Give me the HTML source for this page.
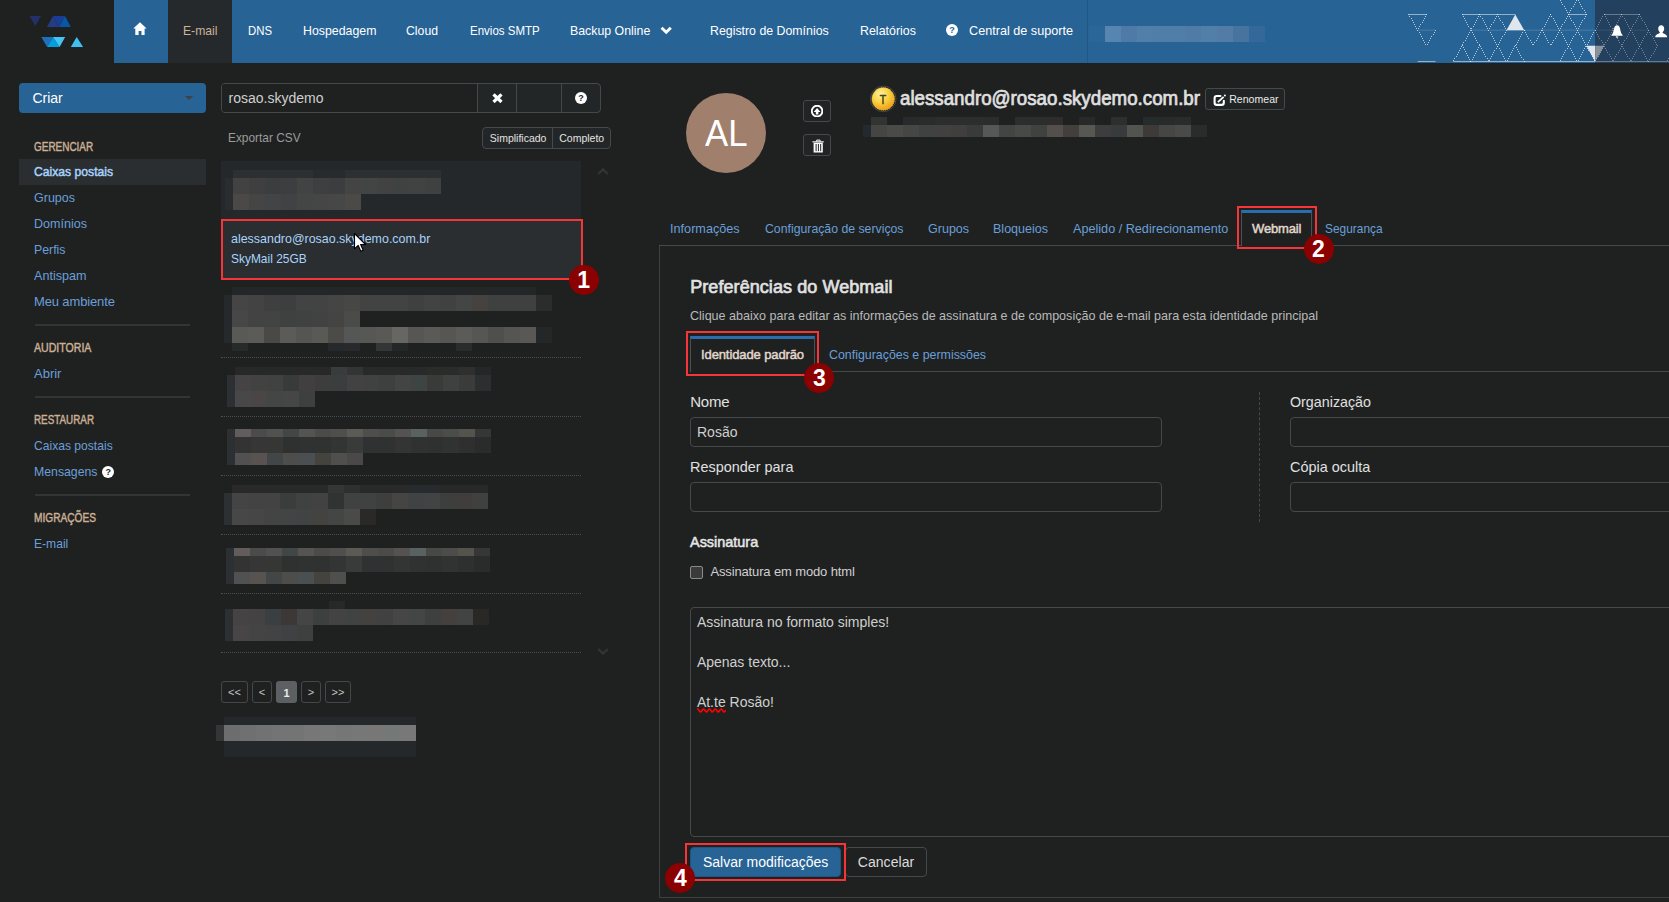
<!DOCTYPE html>
<html lang="pt-BR"><head><meta charset="utf-8"><title>SkyMail - Painel</title><style>
html,body{margin:0;padding:0;}
body{width:1669px;height:902px;overflow:hidden;background:#1f2121;position:relative;font-family:"Liberation Sans",sans-serif;}
.a{position:absolute;display:block;}
.t{position:absolute;white-space:nowrap;line-height:20px;font-family:"Liberation Sans",sans-serif;}
.q{border-radius:50%;text-align:center;font-weight:700;font-family:"Liberation Sans",sans-serif;}
.badge{width:30px;height:30px;border-radius:15px;background:#8b0000;color:#fff;font-weight:700;font-size:23px;line-height:30px;text-align:center;font-family:"Liberation Sans",sans-serif;}
</style></head>
<body>
<div class="a" style="left:114px;top:0px;width:1555px;height:63px;background:#286396;"></div>
<div class="a" style="left:168px;top:0px;width:64px;height:63px;background:#26292b;"></div>
<svg class="a" style="left:20px;top:10px;" width="80" height="45" viewBox="0 0 80 45"><polygon points="9.5,6 21,6 15.3,16.1" fill="#243068"/><polygon points="26.9,16.9 33,6 38.9,16.9" fill="#253c80"/><polygon points="33,6 45,6 38.9,16.9" fill="#1a3c94"/><polygon points="38.9,16.9 45,6 50.8,16.9" fill="#0757a6"/><polygon points="21.3,27 33,27 27.1,37.1" fill="#1e70bc"/><polygon points="27.1,37.1 33,27 39.6,37.1" fill="#00a0e0"/><polygon points="33,27 45.2,27 39.6,37.1" fill="#45c3f3"/><polygon points="56.7,27 50.8,37.1 63.1,37.1" fill="#3fc1f3"/></svg>
<svg class="a" style="left:133.1px;top:22px;" width="14" height="13.5" viewBox="0 0 14 13.5"><path d="M6.96 0.15 L13.6 6.6 L11.6 6.6 L11.6 13.1 L8.5 13.1 L8.5 9.1 L5.6 9.1 L5.6 13.1 L2.3 13.1 L2.3 6.6 L0.3 6.6 Z" fill="#fff"/></svg>
<div class="t" style="left:183.00px;top:21px;font-size:13px;color:#cbb39c;transform:scaleX(0.9366);transform-origin:0 50%;">E-mail</div>
<div class="t" style="left:247.60px;top:21px;font-size:13px;color:#fff;transform:scaleX(0.8745);transform-origin:0 50%;">DNS</div>
<div class="t" style="left:302.50px;top:21px;font-size:13px;color:#fff;transform:scaleX(0.9505);transform-origin:0 50%;">Hospedagem</div>
<div class="t" style="left:406.40px;top:21px;font-size:13px;color:#fff;transform:scaleX(0.9422);transform-origin:0 50%;">Cloud</div>
<div class="t" style="left:469.60px;top:21px;font-size:13px;color:#fff;transform:scaleX(0.8852);transform-origin:0 50%;">Envios SMTP</div>
<div class="t" style="left:569.70px;top:21px;font-size:13px;color:#fff;transform:scaleX(0.9498);transform-origin:0 50%;">Backup Online</div>
<svg class="a" style="left:660.3px;top:26.1px;" width="12.5" height="9" viewBox="0 0 12.5 9"><path d="M1.6 1.7 L6.2 6.3 L10.8 1.7" stroke="#fff" stroke-width="2.9" fill="none"/></svg>
<div class="t" style="left:710.40px;top:21px;font-size:13px;color:#fff;transform:scaleX(0.9496);transform-origin:0 50%;">Registro de Domínios</div>
<div class="t" style="left:859.60px;top:21px;font-size:13px;color:#fff;transform:scaleX(0.9552);transform-origin:0 50%;">Relatórios</div>
<div class="a q" style="left:946px;top:24.3px;width:12px;height:12px;background:#fff;color:#286396;font-size:9px;line-height:12px;">?</div>
<div class="t" style="left:968.80px;top:21px;font-size:13px;color:#fff;transform:scaleX(0.9724);transform-origin:0 50%;">Central de suporte</div>
<div class="a" style="left:1087px;top:0px;width:1px;height:63px;background:rgba(0,0,0,0.12);"></div>
<div class="a" style="left:1089px;top:26px;width:16px;height:16px;background:#2c6699;"></div>
<div class="a" style="left:1105px;top:26px;width:16px;height:16px;background:#5585b0;"></div>
<div class="a" style="left:1121px;top:26px;width:16px;height:16px;background:#4f7aa8;"></div>
<div class="a" style="left:1137px;top:26px;width:16px;height:16px;background:#517fa9;"></div>
<div class="a" style="left:1153px;top:26px;width:16px;height:16px;background:#4f7ea8;"></div>
<div class="a" style="left:1169px;top:26px;width:16px;height:16px;background:#4f7ea8;"></div>
<div class="a" style="left:1185px;top:26px;width:16px;height:16px;background:#507ba7;"></div>
<div class="a" style="left:1201px;top:26px;width:16px;height:16px;background:#517fa8;"></div>
<div class="a" style="left:1217px;top:26px;width:16px;height:16px;background:#527ba6;"></div>
<div class="a" style="left:1233px;top:26px;width:16px;height:16px;background:#46749f;"></div>
<div class="a" style="left:1249px;top:26px;width:16px;height:16px;background:#34689b;"></div>
<div class="a" style="left:1595px;top:0px;width:74px;height:63px;background:#23405f;"></div>
<svg class="a" style="left:1400px;top:0px;" width="269" height="63" viewBox="0 0 269 63"><style>.d,.k{stroke:#fff;stroke-width:1;fill:none}.d{stroke-opacity:.66}.k{stroke-opacity:.36}.s{stroke:#fff;stroke-opacity:.5;stroke-width:1;fill:none}.g{stroke:#fff;stroke-opacity:.3;stroke-width:1;fill:none}.f{stroke:#fff;stroke-opacity:.16;stroke-width:1;fill:none}.h{stroke:#fff;stroke-opacity:.09;stroke-width:1;fill:none}</style><path class="s" d="M8.85 14.50 L26.60 14.50"/><path class="f" d="M17.72 30.17 L35.47 30.17"/><path class="s" d="M17.72 61.50 L35.47 61.50"/><path class="s" d="M62.10 14.50 L115.35 14.50"/><polygon points="115.3,14.5 106.5,30.2 124.2,30.2" fill="#dfe6ee"/><path class="f" d="M70.97 30.17 L195.22 30.17"/><path class="s" d="M168.60 14.50 L186.35 14.50"/><polygon points="186.3,45.8 195.2,45.8 195.2,61.5" fill="#dfe6ee"/><path class="s" d="M53.22 61.50 L195.22 61.50"/><polygon points="195.2,45.8 204.1,45.8 195.2,61.5" fill="#8b9198"/><path class="g" d="M204.10 14.50 L239.60 14.50"/><path class="h" d="M195.22 30.17 L212.97 30.17"/><path class="h" d="M230.72 30.17 L248.47 30.17"/><path class="g" d="M195.22 61.50 L269.00 61.50"/><path class="d" d="M8 14.5h1M9 16.5h1M11 18.5h1M12 20.5h1M13 22.5h1M14 24.5h1M15 26.5h1M16 28.5h1M26 14.5h1M25 16.5h1M24 18.5h1M23 20.5h1M22 22.5h1M20 24.5h1M19 26.5h1M18 28.5h1M17 30.5h1M19 32.5h1M20 34.5h1M21 36.5h1M22 38.5h1M23 40.5h1M24 42.5h1M25 44.5h1M35 30.5h1M34 32.5h1M33 34.5h1M31 36.5h1M30 38.5h1M29 40.5h1M28 42.5h1M27 44.5h1M62 14.5h1M63 16.5h1M64 18.5h1M65 20.5h1M66 22.5h1M67 24.5h1M68 26.5h1M70 28.5h1M71 30.5h1M72 32.5h1M73 34.5h1M74 36.5h1M75 38.5h1M76 40.5h1M77 42.5h1M79 44.5h1M80 46.5h1M81 48.5h1M82 50.5h1M83 52.5h1M84 54.5h1M85 56.5h1M87 58.5h1M88 60.5h1M79 14.5h1M78 16.5h1M77 18.5h1M76 20.5h1M75 22.5h1M74 24.5h1M73 26.5h1M71 28.5h1M70 30.5h1M69 32.5h1M68 34.5h1M67 36.5h1M66 38.5h1M65 40.5h1M63 42.5h1M62 44.5h1M61 46.5h1M60 48.5h1M59 50.5h1M58 52.5h1M57 54.5h1M56 56.5h1M54 58.5h1M53 60.5h1M79 14.5h1M80 16.5h1M82 18.5h1M83 20.5h1M84 22.5h1M85 24.5h1M86 26.5h1M87 28.5h1M88 30.5h1M90 32.5h1M91 34.5h1M92 36.5h1M93 38.5h1M94 40.5h1M95 42.5h1M96 44.5h1M97 46.5h1M99 48.5h1M100 50.5h1M101 52.5h1M102 54.5h1M103 56.5h1M104 58.5h1M105 60.5h1M97 14.5h1M96 16.5h1M95 18.5h1M94 20.5h1M93 22.5h1M91 24.5h1M90 26.5h1M89 28.5h1M97 14.5h1M98 16.5h1M99 18.5h1M100 20.5h1M102 22.5h1M103 24.5h1M104 26.5h1M105 28.5h1M106 30.5h1M105 32.5h1M104 34.5h1M102 36.5h1M101 38.5h1M100 40.5h1M99 42.5h1M98 44.5h1M97 46.5h1M96 48.5h1M94 50.5h1M93 52.5h1M92 54.5h1M91 56.5h1M90 58.5h1M89 60.5h1M124 30.5h1M122 32.5h1M121 34.5h1M120 36.5h1M119 38.5h1M118 40.5h1M117 42.5h1M116 44.5h1M114 46.5h1M113 48.5h1M112 50.5h1M111 52.5h1M110 54.5h1M109 56.5h1M108 58.5h1M107 60.5h1M115 45.5h1M116 47.5h1M117 49.5h1M118 51.5h1M119 53.5h1M120 55.5h1M121 57.5h1M123 59.5h1M124 61.5h1M124 30.5h1M125 32.5h1M126 34.5h1M127 36.5h1M128 38.5h1M130 40.5h1M131 42.5h1M132 44.5h1M62 45.5h1M63 47.5h1M64 49.5h1M65 51.5h1M66 53.5h1M67 55.5h1M68 57.5h1M69 59.5h1M70 61.5h1M79 45.5h1M78 47.5h1M77 49.5h1M76 51.5h1M75 53.5h1M74 55.5h1M73 57.5h1M72 59.5h1M70 61.5h1M150 14.5h1M149 16.5h1M148 18.5h1M147 20.5h1M146 22.5h1M145 24.5h1M144 26.5h1M142 28.5h1M141 30.5h1M140 32.5h1M139 34.5h1M138 36.5h1M137 38.5h1M136 40.5h1M134 42.5h1M133 44.5h1M150 14.5h1M151 16.5h1M153 18.5h1M154 20.5h1M155 22.5h1M156 24.5h1M157 26.5h1M158 28.5h1M142 30.5h1M143 32.5h1M144 34.5h1M145 36.5h1M146 38.5h1M147 40.5h1M148 42.5h1M150 44.5h1M177 -1.5h1M176 0.5h1M175 2.5h1M174 4.5h1M173 6.5h1M171 8.5h1M170 10.5h1M169 12.5h1M168 14.5h1M167 16.5h1M166 18.5h1M165 20.5h1M164 22.5h1M162 24.5h1M161 26.5h1M160 28.5h1M159 30.5h1M158 32.5h1M157 34.5h1M156 36.5h1M155 38.5h1M153 40.5h1M152 42.5h1M151 44.5h1M159 -1.5h1M160 0.5h1M161 2.5h1M162 4.5h1M164 6.5h1M165 8.5h1M166 10.5h1M167 12.5h1M168 14.5h1M169 16.5h1M170 18.5h1M171 20.5h1M173 22.5h1M174 24.5h1M175 26.5h1M176 28.5h1M177 30.5h1M178 32.5h1M179 34.5h1M181 36.5h1M182 38.5h1M183 40.5h1M184 42.5h1M185 44.5h1M186 46.5h1M187 48.5h1M188 50.5h1M190 52.5h1M191 54.5h1M192 56.5h1M193 58.5h1M194 60.5h1M177 -1.5h1M178 0.5h1M179 2.5h1M180 4.5h1M181 6.5h1M182 8.5h1M184 10.5h1M185 12.5h1M186 14.5h1M186 14.5h1M185 16.5h1M184 18.5h1M182 20.5h1M181 22.5h1M180 24.5h1M179 26.5h1M178 28.5h1M177 30.5h1M176 32.5h1M175 34.5h1M173 36.5h1M172 38.5h1M171 40.5h1M170 42.5h1M169 44.5h1M168 46.5h1M167 48.5h1M165 50.5h1M164 52.5h1M163 54.5h1M162 56.5h1M161 58.5h1M160 60.5h1M159 30.5h1M161 32.5h1M162 34.5h1M163 36.5h1M164 38.5h1M165 40.5h1M166 42.5h1M167 44.5h1M168 46.5h1M170 48.5h1M171 50.5h1M172 52.5h1M173 54.5h1M174 56.5h1M175 58.5h1M176 60.5h1M195 30.5h1M193 32.5h1M192 34.5h1M191 36.5h1M190 38.5h1M189 40.5h1M188 42.5h1M187 44.5h1M185 46.5h1M184 48.5h1M183 50.5h1M182 52.5h1M181 54.5h1M180 56.5h1M179 58.5h1M178 60.5h1"/><path class="k" d="M204 14.5h1M202 16.5h1M201 18.5h1M200 20.5h1M199 22.5h1M198 24.5h1M197 26.5h1M196 28.5h1M204 14.5h1M205 16.5h1M206 18.5h1M207 20.5h1M208 22.5h1M209 24.5h1M210 26.5h1M212 28.5h1M213 30.5h1M214 32.5h1M215 34.5h1M216 36.5h1M217 38.5h1M218 40.5h1M219 42.5h1M221 44.5h1M222 46.5h1M223 48.5h1M224 50.5h1M225 52.5h1M226 54.5h1M227 56.5h1M229 58.5h1M230 60.5h1M221 14.5h1M220 16.5h1M219 18.5h1M218 20.5h1M217 22.5h1M216 24.5h1M215 26.5h1M213 28.5h1M212 30.5h1M211 32.5h1M210 34.5h1M209 36.5h1M208 38.5h1M207 40.5h1M205 42.5h1M204 44.5h1M203 46.5h1M202 48.5h1M201 50.5h1M200 52.5h1M199 54.5h1M198 56.5h1M196 58.5h1M195 60.5h1M221 14.5h1M222 16.5h1M224 18.5h1M225 20.5h1M226 22.5h1M227 24.5h1M228 26.5h1M229 28.5h1M230 30.5h1M232 32.5h1M233 34.5h1M234 36.5h1M235 38.5h1M236 40.5h1M237 42.5h1M238 44.5h1M239 46.5h1M241 48.5h1M242 50.5h1M243 52.5h1M244 54.5h1M245 56.5h1M246 58.5h1M247 60.5h1M239 14.5h1M238 16.5h1M237 18.5h1M236 20.5h1M235 22.5h1M233 24.5h1M232 26.5h1M231 28.5h1M230 30.5h1M229 32.5h1M228 34.5h1M227 36.5h1M226 38.5h1M224 40.5h1M223 42.5h1M222 44.5h1M221 46.5h1M220 48.5h1M219 50.5h1M218 52.5h1M216 54.5h1M215 56.5h1M214 58.5h1M213 60.5h1M239 14.5h1M240 16.5h1M241 18.5h1M242 20.5h1M244 22.5h1M245 24.5h1M246 26.5h1M247 28.5h1M248 30.5h1M249 32.5h1M250 34.5h1M252 36.5h1M253 38.5h1M254 40.5h1M255 42.5h1M256 44.5h1M257 45.5h1M256 47.5h1M255 49.5h1M254 51.5h1M253 53.5h1M251 55.5h1M250 57.5h1M249 59.5h1M248 61.5h1M195 30.5h1M196 32.5h1M197 34.5h1M198 36.5h1M199 38.5h1M201 40.5h1M202 42.5h1M203 44.5h1M204 46.5h1M205 48.5h1M206 50.5h1M207 52.5h1M209 54.5h1M210 56.5h1M211 58.5h1M212 60.5h1M248 30.5h1M247 32.5h1M246 34.5h1M244 36.5h1M243 38.5h1M242 40.5h1M241 42.5h1M240 44.5h1M239 46.5h1M238 48.5h1M236 50.5h1M235 52.5h1M234 54.5h1M233 56.5h1M232 58.5h1M231 60.5h1M268 58.5h1M267 60.5h1"/></svg>
<svg class="a" style="left:1611px;top:24.5px;" width="12.2" height="13" viewBox="0 0 12.2 13"><path d="M6.05 0.2 C7.6 0.2 8.4 1.2 8.9 3 C9.4 5 9.6 6.6 10.2 8 C10.6 9 11.2 9.8 11.7 10.3 L11.7 10.8 L0.4 10.8 L0.4 10.3 C0.9 9.8 1.5 9 1.9 8 C2.5 6.6 2.7 5 3.2 3 C3.7 1.2 4.5 0.2 6.05 0.2 Z" fill="#fff"/><rect x="4.9" y="11.5" width="2.3" height="1.1" fill="#fff"/></svg>
<svg class="a" style="left:1655px;top:24.5px;" width="13" height="13" viewBox="0 0 13 13"><path d="M6.2 0.3 C8 0.3 9.2 1.6 9.2 3.6 C9.2 5.4 8.4 6.6 7.6 7.2 L7.6 8 C9.4 8.8 12 9.6 12.2 12.2 L0.2 12.2 C0.4 9.6 3 8.8 4.8 8 L4.8 7.2 C4 6.6 3.2 5.4 3.2 3.6 C3.2 1.6 4.4 0.3 6.2 0.3 Z" fill="#fff"/></svg>
<div class="a" style="left:19px;top:83px;width:187px;height:30px;background:#286396;border-radius:4px;"></div>
<div class="t" style="left:32.40px;top:88px;font-size:14px;color:#fff;">Criar</div>
<svg class="a" style="left:185px;top:96px;" width="8" height="4" viewBox="0 0 8 4"><polygon points="0,0 8,0 4,4" fill="#3f4143"/></svg>
<div class="t" style="left:34.00px;top:137px;font-size:12px;color:#cbb095;transform:scaleX(0.8298);transform-origin:0 50%;-webkit-text-stroke:0.43px currentColor;">GERENCIAR</div>
<div class="a" style="left:19px;top:159px;width:187px;height:26px;background:#2b2e30;"></div>
<div class="t" style="left:34.00px;top:162px;font-size:13px;color:#a9d3fb;transform:scaleX(0.9357);transform-origin:0 50%;-webkit-text-stroke:0.47px currentColor;">Caixas postais</div>
<div class="t" style="left:34.00px;top:188px;font-size:13px;color:#6a9fd8;transform:scaleX(0.9617);transform-origin:0 50%;">Grupos</div>
<div class="t" style="left:34.00px;top:214px;font-size:13px;color:#6a9fd8;transform:scaleX(0.9653);transform-origin:0 50%;">Domínios</div>
<div class="t" style="left:34.00px;top:240px;font-size:13px;color:#6a9fd8;transform:scaleX(0.9479);transform-origin:0 50%;">Perfis</div>
<div class="t" style="left:34.00px;top:266px;font-size:13px;color:#6a9fd8;transform:scaleX(0.9688);transform-origin:0 50%;">Antispam</div>
<div class="t" style="left:34.00px;top:292px;font-size:13px;color:#6a9fd8;letter-spacing:-0.132px;">Meu ambiente</div>
<div class="a" style="left:35px;top:324px;width:155px;height:2px;background:#323537;"></div>
<div class="t" style="left:34.00px;top:338px;font-size:12px;color:#cbb095;transform:scaleX(0.8814);transform-origin:0 50%;-webkit-text-stroke:0.43px currentColor;">AUDITORIA</div>
<div class="t" style="left:34.00px;top:364px;font-size:13px;color:#6a9fd8;letter-spacing:-0.009px;">Abrir</div>
<div class="a" style="left:35px;top:396px;width:155px;height:2px;background:#323537;"></div>
<div class="t" style="left:34.00px;top:410px;font-size:12px;color:#cbb095;transform:scaleX(0.8206);transform-origin:0 50%;-webkit-text-stroke:0.43px currentColor;">RESTAURAR</div>
<div class="t" style="left:34.00px;top:436px;font-size:13px;color:#6a9fd8;transform:scaleX(0.9310);transform-origin:0 50%;">Caixas postais</div>
<div class="t" style="left:34.00px;top:462px;font-size:13px;color:#6a9fd8;transform:scaleX(0.9448);transform-origin:0 50%;">Mensagens</div>
<div class="a q" style="left:102.3px;top:465.5px;width:12px;height:12px;background:#fff;color:#1f2121;font-size:9px;line-height:12px;">?</div>
<div class="a" style="left:35px;top:494px;width:155px;height:2px;background:#323537;"></div>
<div class="t" style="left:34.00px;top:508px;font-size:12px;color:#cbb095;transform:scaleX(0.8453);transform-origin:0 50%;-webkit-text-stroke:0.43px currentColor;">MIGRAÇÕES</div>
<div class="t" style="left:34.00px;top:534px;font-size:13px;color:#6a9fd8;transform:scaleX(0.9312);transform-origin:0 50%;">E-mail</div>
<div class="a" style="left:221px;top:83px;width:380px;height:30px;border:1px solid #45494b;border-radius:4px;box-sizing:border-box;background:#232626;"></div>
<div class="a" style="left:222px;top:84px;width:255px;height:28px;background:#1f2121;border-radius:3px 0 0 3px;"></div>
<div class="a" style="left:477px;top:84px;width:1px;height:28px;background:#45494b;"></div>
<div class="a" style="left:516px;top:84px;width:1px;height:28px;background:#45494b;"></div>
<div class="a" style="left:561px;top:84px;width:1px;height:28px;background:#45494b;"></div>
<div class="t" style="left:228.60px;top:88px;font-size:14px;color:#cfcfcf;">rosao.skydemo</div>
<svg class="a" style="left:491.5px;top:93px;" width="11" height="10.4" viewBox="0 0 11 10.4"><path d="M1.5 1.4 L9.5 9 M9.5 1.4 L1.5 9" stroke="#fff" stroke-width="3.3" fill="none"/></svg>
<div class="a q" style="left:575px;top:92px;width:12px;height:12px;background:#fff;color:#232626;font-size:9px;line-height:12px;">?</div>
<div class="t" style="left:227.90px;top:128px;font-size:13px;color:#9b9b9b;transform:scaleX(0.9135);transform-origin:0 50%;">Exportar CSV</div>
<div class="a" style="left:482px;top:127px;width:129px;height:22px;border:1px solid #45494b;border-radius:4px;box-sizing:border-box;background:#232626;"></div>
<div class="a" style="left:552px;top:128px;width:1px;height:20px;background:#45494b;"></div>
<div class="t" style="left:489.80px;top:128px;font-size:10.5px;color:#e4e4e4;">Simplificado</div>
<div class="t" style="left:559.20px;top:128px;font-size:10.5px;color:#e4e4e4;letter-spacing:0.008px;">Completo</div>
<div class="a" style="left:221px;top:161px;width:360px;height:58px;background:#25282a;"></div>
<svg class="a" style="left:597px;top:168px;" width="12" height="7" viewBox="0 0 12 7"><path d="M1.2 6 L6 1.4 L10.8 6" stroke="#323537" stroke-width="2.2" fill="none"/></svg>
<svg class="a" style="left:597px;top:647.5px;" width="12" height="7" viewBox="0 0 12 7"><path d="M1.2 1 L6 5.6 L10.8 1" stroke="#323537" stroke-width="2.2" fill="none"/></svg>
<div class="a" style="left:233px;top:170px;width:16px;height:8px;background:#2d3032;"></div>
<div class="a" style="left:249px;top:170px;width:16px;height:8px;background:#2d3032;"></div>
<div class="a" style="left:265px;top:170px;width:16px;height:8px;background:#2d3032;"></div>
<div class="a" style="left:281px;top:170px;width:16px;height:8px;background:#2d3032;"></div>
<div class="a" style="left:297px;top:170px;width:16px;height:8px;background:#2d3032;"></div>
<div class="a" style="left:313px;top:170px;width:16px;height:8px;background:#282b2d;"></div>
<div class="a" style="left:329px;top:170px;width:16px;height:8px;background:#282b2d;"></div>
<div class="a" style="left:345px;top:170px;width:16px;height:8px;background:#2d3032;"></div>
<div class="a" style="left:361px;top:170px;width:16px;height:8px;background:#2d3032;"></div>
<div class="a" style="left:377px;top:170px;width:16px;height:8px;background:#2d3032;"></div>
<div class="a" style="left:393px;top:170px;width:16px;height:8px;background:#2d3032;"></div>
<div class="a" style="left:409px;top:170px;width:16px;height:8px;background:#2d3032;"></div>
<div class="a" style="left:425px;top:170px;width:16px;height:8px;background:#2d3032;"></div>
<div class="a" style="left:225px;top:178px;width:8px;height:16px;background:#2a2d30;"></div>
<div class="a" style="left:233px;top:178px;width:16px;height:16px;background:#434243;"></div>
<div class="a" style="left:249px;top:178px;width:16px;height:16px;background:#403f40;"></div>
<div class="a" style="left:265px;top:178px;width:16px;height:16px;background:#3c3d3f;"></div>
<div class="a" style="left:281px;top:178px;width:16px;height:16px;background:#3c3e3f;"></div>
<div class="a" style="left:297px;top:178px;width:16px;height:16px;background:#424343;"></div>
<div class="a" style="left:313px;top:178px;width:16px;height:16px;background:#3e3f40;"></div>
<div class="a" style="left:329px;top:178px;width:16px;height:16px;background:#3b3d3e;"></div>
<div class="a" style="left:345px;top:178px;width:16px;height:16px;background:#444444;"></div>
<div class="a" style="left:361px;top:178px;width:16px;height:16px;background:#434444;"></div>
<div class="a" style="left:377px;top:178px;width:16px;height:16px;background:#424242;"></div>
<div class="a" style="left:393px;top:178px;width:16px;height:16px;background:#404141;"></div>
<div class="a" style="left:409px;top:178px;width:16px;height:16px;background:#414242;"></div>
<div class="a" style="left:425px;top:178px;width:16px;height:16px;background:#3f4040;"></div>
<div class="a" style="left:225px;top:194px;width:8px;height:16px;background:#2a2d30;"></div>
<div class="a" style="left:233px;top:194px;width:16px;height:16px;background:#4a4948;"></div>
<div class="a" style="left:249px;top:194px;width:16px;height:16px;background:#454545;"></div>
<div class="a" style="left:265px;top:194px;width:16px;height:16px;background:#434445;"></div>
<div class="a" style="left:281px;top:194px;width:16px;height:16px;background:#404243;"></div>
<div class="a" style="left:297px;top:194px;width:16px;height:16px;background:#444545;"></div>
<div class="a" style="left:313px;top:194px;width:16px;height:16px;background:#454645;"></div>
<div class="a" style="left:329px;top:194px;width:16px;height:16px;background:#474747;"></div>
<div class="a" style="left:345px;top:194px;width:16px;height:16px;background:#4b4a49;"></div>
<div class="a" style="left:221px;top:219px;width:362px;height:61px;background:#2a2e30;border:2px solid #f73538;box-sizing:border-box;"></div>
<div class="t" style="left:230.80px;top:229px;font-size:13px;color:#a9d3fb;transform:scaleX(0.9573);transform-origin:0 50%;">alessandro@rosao.skydemo.com.br</div>
<div class="t" style="left:230.80px;top:249px;font-size:13px;color:#a9d3fb;transform:scaleX(0.9191);transform-origin:0 50%;">SkyMail 25GB</div>
<div class="a badge" style="left:568.6px;top:264.6px;">1</div>
<svg class="a" style="left:353px;top:232px;" width="14" height="21" viewBox="0 0 14 21"><path d="M1.5 1.5 L1.5 16.8 L5.2 13.4 L7.8 19.3 L10.2 18.2 L7.6 12.5 L12.6 12.5 Z" fill="#fff" stroke="#000" stroke-width="1.1" stroke-linejoin="round"/></svg>
<div class="a" style="left:232px;top:287px;width:16px;height:8px;background:#242727;"></div>
<div class="a" style="left:248px;top:287px;width:16px;height:8px;background:#242727;"></div>
<div class="a" style="left:264px;top:287px;width:16px;height:8px;background:#242727;"></div>
<div class="a" style="left:280px;top:287px;width:16px;height:8px;background:#242727;"></div>
<div class="a" style="left:296px;top:287px;width:16px;height:8px;background:#242727;"></div>
<div class="a" style="left:312px;top:287px;width:16px;height:8px;background:#242727;"></div>
<div class="a" style="left:328px;top:287px;width:16px;height:8px;background:#242727;"></div>
<div class="a" style="left:344px;top:287px;width:16px;height:8px;background:#242727;"></div>
<div class="a" style="left:360px;top:287px;width:16px;height:8px;background:#242727;"></div>
<div class="a" style="left:376px;top:287px;width:16px;height:8px;background:#242727;"></div>
<div class="a" style="left:392px;top:287px;width:16px;height:8px;background:#242727;"></div>
<div class="a" style="left:408px;top:287px;width:16px;height:8px;background:#242727;"></div>
<div class="a" style="left:424px;top:287px;width:16px;height:8px;background:#242727;"></div>
<div class="a" style="left:440px;top:287px;width:16px;height:8px;background:#242727;"></div>
<div class="a" style="left:456px;top:287px;width:16px;height:8px;background:#242727;"></div>
<div class="a" style="left:472px;top:287px;width:16px;height:8px;background:#242727;"></div>
<div class="a" style="left:488px;top:287px;width:16px;height:8px;background:#242727;"></div>
<div class="a" style="left:504px;top:287px;width:16px;height:8px;background:#242727;"></div>
<div class="a" style="left:520px;top:287px;width:16px;height:8px;background:#242727;"></div>
<div class="a" style="left:224px;top:295px;width:8px;height:48px;background:#25292c;"></div>
<div class="a" style="left:232px;top:295px;width:16px;height:16px;background:#464445;"></div>
<div class="a" style="left:248px;top:295px;width:16px;height:16px;background:#444344;"></div>
<div class="a" style="left:264px;top:295px;width:16px;height:16px;background:#403f3f;"></div>
<div class="a" style="left:280px;top:295px;width:16px;height:16px;background:#3d3e3f;"></div>
<div class="a" style="left:296px;top:295px;width:16px;height:16px;background:#424342;"></div>
<div class="a" style="left:312px;top:295px;width:16px;height:16px;background:#424443;"></div>
<div class="a" style="left:328px;top:295px;width:16px;height:16px;background:#454545;"></div>
<div class="a" style="left:344px;top:295px;width:16px;height:16px;background:#474746;"></div>
<div class="a" style="left:360px;top:295px;width:16px;height:16px;background:#444344;"></div>
<div class="a" style="left:376px;top:295px;width:16px;height:16px;background:#424343;"></div>
<div class="a" style="left:392px;top:295px;width:16px;height:16px;background:#434343;"></div>
<div class="a" style="left:408px;top:295px;width:16px;height:16px;background:#3f4040;"></div>
<div class="a" style="left:424px;top:295px;width:16px;height:16px;background:#424343;"></div>
<div class="a" style="left:440px;top:295px;width:16px;height:16px;background:#404141;"></div>
<div class="a" style="left:456px;top:295px;width:16px;height:16px;background:#444646;"></div>
<div class="a" style="left:472px;top:295px;width:16px;height:16px;background:#45423f;"></div>
<div class="a" style="left:488px;top:295px;width:16px;height:16px;background:#3f4040;"></div>
<div class="a" style="left:504px;top:295px;width:16px;height:16px;background:#3f4141;"></div>
<div class="a" style="left:520px;top:295px;width:16px;height:16px;background:#404040;"></div>
<div class="a" style="left:536px;top:295px;width:16px;height:16px;background:#2b2d2d;"></div>
<div class="a" style="left:232px;top:311px;width:16px;height:16px;background:#484747;"></div>
<div class="a" style="left:248px;top:311px;width:16px;height:16px;background:#434344;"></div>
<div class="a" style="left:264px;top:311px;width:16px;height:16px;background:#424343;"></div>
<div class="a" style="left:280px;top:311px;width:16px;height:16px;background:#3f4141;"></div>
<div class="a" style="left:296px;top:311px;width:16px;height:16px;background:#404241;"></div>
<div class="a" style="left:312px;top:311px;width:16px;height:16px;background:#414241;"></div>
<div class="a" style="left:328px;top:311px;width:16px;height:16px;background:#444443;"></div>
<div class="a" style="left:344px;top:311px;width:16px;height:16px;background:#4b4b4a;"></div>
<div class="a" style="left:232px;top:327px;width:16px;height:16px;background:#595955;"></div>
<div class="a" style="left:248px;top:327px;width:16px;height:16px;background:#5b5c58;"></div>
<div class="a" style="left:264px;top:327px;width:16px;height:16px;background:#4a4945;"></div>
<div class="a" style="left:280px;top:327px;width:16px;height:16px;background:#5b5b57;"></div>
<div class="a" style="left:296px;top:327px;width:16px;height:16px;background:#555653;"></div>
<div class="a" style="left:312px;top:327px;width:16px;height:16px;background:#595955;"></div>
<div class="a" style="left:328px;top:327px;width:16px;height:16px;background:#4c4b48;"></div>
<div class="a" style="left:344px;top:327px;width:16px;height:16px;background:#555756;"></div>
<div class="a" style="left:360px;top:327px;width:16px;height:16px;background:#575756;"></div>
<div class="a" style="left:376px;top:327px;width:16px;height:16px;background:#5a5955;"></div>
<div class="a" style="left:392px;top:327px;width:16px;height:16px;background:#666762;"></div>
<div class="a" style="left:408px;top:327px;width:16px;height:16px;background:#575654;"></div>
<div class="a" style="left:424px;top:327px;width:16px;height:16px;background:#5a5a56;"></div>
<div class="a" style="left:440px;top:327px;width:16px;height:16px;background:#575653;"></div>
<div class="a" style="left:456px;top:327px;width:16px;height:16px;background:#5b5b58;"></div>
<div class="a" style="left:472px;top:327px;width:16px;height:16px;background:#565654;"></div>
<div class="a" style="left:488px;top:327px;width:16px;height:16px;background:#4f4f4d;"></div>
<div class="a" style="left:504px;top:327px;width:16px;height:16px;background:#555553;"></div>
<div class="a" style="left:520px;top:327px;width:16px;height:16px;background:#595855;"></div>
<div class="a" style="left:536px;top:327px;width:16px;height:16px;background:#242727;"></div>
<div class="a" style="left:232px;top:343px;width:16px;height:8px;background:#272a2a;"></div>
<div class="a" style="left:328px;top:343px;width:16px;height:8px;background:#25292c;"></div>
<div class="a" style="left:344px;top:343px;width:16px;height:8px;background:#282a2b;"></div>
<div class="a" style="left:376px;top:343px;width:16px;height:8px;background:#323636;"></div>
<div class="a" style="left:392px;top:343px;width:16px;height:8px;background:#242727;"></div>
<div class="a" style="left:456px;top:343px;width:16px;height:8px;background:#2a2b2b;"></div>
<div class="a" style="left:221px;top:357px;width:360px;height:1px;border-top:1px dotted #4a4d4f;height:0;"></div>
<div class="a" style="left:235px;top:367px;width:16px;height:8px;background:#272929;"></div>
<div class="a" style="left:251px;top:367px;width:16px;height:8px;background:#272929;"></div>
<div class="a" style="left:267px;top:367px;width:16px;height:8px;background:#272929;"></div>
<div class="a" style="left:283px;top:367px;width:16px;height:8px;background:#272929;"></div>
<div class="a" style="left:299px;top:367px;width:16px;height:8px;background:#272929;"></div>
<div class="a" style="left:315px;top:367px;width:16px;height:8px;background:#272929;"></div>
<div class="a" style="left:331px;top:367px;width:16px;height:8px;background:#3a3b3b;"></div>
<div class="a" style="left:347px;top:367px;width:16px;height:8px;background:#333535;"></div>
<div class="a" style="left:363px;top:367px;width:16px;height:8px;background:#282a2a;"></div>
<div class="a" style="left:379px;top:367px;width:16px;height:8px;background:#282a2a;"></div>
<div class="a" style="left:395px;top:367px;width:16px;height:8px;background:#282a2a;"></div>
<div class="a" style="left:411px;top:367px;width:16px;height:8px;background:#282a2a;"></div>
<div class="a" style="left:427px;top:367px;width:16px;height:8px;background:#2a2c2c;"></div>
<div class="a" style="left:443px;top:367px;width:16px;height:8px;background:#2a2c2c;"></div>
<div class="a" style="left:459px;top:367px;width:16px;height:8px;background:#2e3030;"></div>
<div class="a" style="left:475px;top:367px;width:16px;height:8px;background:#252727;"></div>
<div class="a" style="left:227px;top:375px;width:8px;height:32px;background:#2c3033;"></div>
<div class="a" style="left:235px;top:375px;width:16px;height:16px;background:#454344;"></div>
<div class="a" style="left:251px;top:375px;width:16px;height:16px;background:#434243;"></div>
<div class="a" style="left:267px;top:375px;width:16px;height:16px;background:#424141;"></div>
<div class="a" style="left:283px;top:375px;width:16px;height:16px;background:#393b3b;"></div>
<div class="a" style="left:299px;top:375px;width:16px;height:16px;background:#413f40;"></div>
<div class="a" style="left:315px;top:375px;width:16px;height:16px;background:#3d3d3d;"></div>
<div class="a" style="left:331px;top:375px;width:16px;height:16px;background:#3b3e3e;"></div>
<div class="a" style="left:347px;top:375px;width:16px;height:16px;background:#424242;"></div>
<div class="a" style="left:363px;top:375px;width:16px;height:16px;background:#424141;"></div>
<div class="a" style="left:379px;top:375px;width:16px;height:16px;background:#3e3f3f;"></div>
<div class="a" style="left:395px;top:375px;width:16px;height:16px;background:#434444;"></div>
<div class="a" style="left:411px;top:375px;width:16px;height:16px;background:#3e4343;"></div>
<div class="a" style="left:427px;top:375px;width:16px;height:16px;background:#3a3a39;"></div>
<div class="a" style="left:443px;top:375px;width:16px;height:16px;background:#3f4040;"></div>
<div class="a" style="left:459px;top:375px;width:16px;height:16px;background:#3b3b3a;"></div>
<div class="a" style="left:475px;top:375px;width:16px;height:16px;background:#2c2f2f;"></div>
<div class="a" style="left:235px;top:391px;width:16px;height:16px;background:#484848;"></div>
<div class="a" style="left:251px;top:391px;width:16px;height:16px;background:#4a4645;"></div>
<div class="a" style="left:267px;top:391px;width:16px;height:16px;background:#444545;"></div>
<div class="a" style="left:283px;top:391px;width:16px;height:16px;background:#464646;"></div>
<div class="a" style="left:299px;top:391px;width:16px;height:16px;background:#3e4040;"></div>
<div class="a" style="left:221px;top:416px;width:360px;height:1px;border-top:1px dotted #4a4d4f;height:0;"></div>
<div class="a" style="left:227px;top:429px;width:8px;height:36px;background:#2c3033;"></div>
<div class="a" style="left:235px;top:429px;width:16px;height:8px;background:#625d5c;"></div>
<div class="a" style="left:251px;top:429px;width:16px;height:8px;background:#4b4b4b;"></div>
<div class="a" style="left:267px;top:429px;width:16px;height:8px;background:#515151;"></div>
<div class="a" style="left:283px;top:429px;width:16px;height:8px;background:#434646;"></div>
<div class="a" style="left:299px;top:429px;width:16px;height:8px;background:#555452;"></div>
<div class="a" style="left:315px;top:429px;width:16px;height:8px;background:#4c4b4a;"></div>
<div class="a" style="left:331px;top:429px;width:16px;height:8px;background:#514f4e;"></div>
<div class="a" style="left:347px;top:429px;width:16px;height:8px;background:#5c5a55;"></div>
<div class="a" style="left:363px;top:429px;width:16px;height:8px;background:#504e4c;"></div>
<div class="a" style="left:379px;top:429px;width:16px;height:8px;background:#4b4b4a;"></div>
<div class="a" style="left:395px;top:429px;width:16px;height:8px;background:#545352;"></div>
<div class="a" style="left:411px;top:429px;width:16px;height:8px;background:#5a6161;"></div>
<div class="a" style="left:427px;top:429px;width:16px;height:8px;background:#484947;"></div>
<div class="a" style="left:443px;top:429px;width:16px;height:8px;background:#4c4c4b;"></div>
<div class="a" style="left:459px;top:429px;width:16px;height:8px;background:#54534c;"></div>
<div class="a" style="left:475px;top:429px;width:16px;height:8px;background:#363636;"></div>
<div class="a" style="left:235px;top:437px;width:16px;height:16px;background:#343333;"></div>
<div class="a" style="left:251px;top:437px;width:16px;height:16px;background:#363636;"></div>
<div class="a" style="left:267px;top:437px;width:16px;height:16px;background:#363635;"></div>
<div class="a" style="left:283px;top:437px;width:16px;height:16px;background:#2f3131;"></div>
<div class="a" style="left:299px;top:437px;width:16px;height:16px;background:#303131;"></div>
<div class="a" style="left:315px;top:437px;width:16px;height:16px;background:#303131;"></div>
<div class="a" style="left:331px;top:437px;width:16px;height:16px;background:#333535;"></div>
<div class="a" style="left:347px;top:437px;width:16px;height:16px;background:#393a3a;"></div>
<div class="a" style="left:363px;top:437px;width:16px;height:16px;background:#2f3232;"></div>
<div class="a" style="left:379px;top:437px;width:16px;height:16px;background:#303232;"></div>
<div class="a" style="left:395px;top:437px;width:16px;height:16px;background:#343434;"></div>
<div class="a" style="left:411px;top:437px;width:16px;height:16px;background:#303232;"></div>
<div class="a" style="left:427px;top:437px;width:16px;height:16px;background:#2f3131;"></div>
<div class="a" style="left:443px;top:437px;width:16px;height:16px;background:#313232;"></div>
<div class="a" style="left:459px;top:437px;width:16px;height:16px;background:#2f2f2f;"></div>
<div class="a" style="left:475px;top:437px;width:16px;height:16px;background:#2a2b2b;"></div>
<div class="a" style="left:235px;top:453px;width:16px;height:12px;background:#515151;"></div>
<div class="a" style="left:251px;top:453px;width:16px;height:12px;background:#585250;"></div>
<div class="a" style="left:267px;top:453px;width:16px;height:12px;background:#434646;"></div>
<div class="a" style="left:283px;top:453px;width:16px;height:12px;background:#4d4d4c;"></div>
<div class="a" style="left:299px;top:453px;width:16px;height:12px;background:#4a5052;"></div>
<div class="a" style="left:315px;top:453px;width:16px;height:12px;background:#44433e;"></div>
<div class="a" style="left:331px;top:453px;width:16px;height:12px;background:#4f4f4e;"></div>
<div class="a" style="left:347px;top:453px;width:16px;height:12px;background:#4a4848;"></div>
<div class="a" style="left:221px;top:475px;width:360px;height:1px;border-top:1px dotted #4a4d4f;height:0;"></div>
<div class="a" style="left:232px;top:485px;width:16px;height:8px;background:#2a2929;"></div>
<div class="a" style="left:248px;top:485px;width:16px;height:8px;background:#2a2929;"></div>
<div class="a" style="left:264px;top:485px;width:16px;height:8px;background:#2a2929;"></div>
<div class="a" style="left:280px;top:485px;width:16px;height:8px;background:#2a2929;"></div>
<div class="a" style="left:296px;top:485px;width:16px;height:8px;background:#2a2929;"></div>
<div class="a" style="left:312px;top:485px;width:16px;height:8px;background:#2a2929;"></div>
<div class="a" style="left:328px;top:485px;width:16px;height:8px;background:#343535;"></div>
<div class="a" style="left:344px;top:485px;width:16px;height:8px;background:#2e3030;"></div>
<div class="a" style="left:360px;top:485px;width:16px;height:8px;background:#282a2a;"></div>
<div class="a" style="left:376px;top:485px;width:16px;height:8px;background:#282a2a;"></div>
<div class="a" style="left:392px;top:485px;width:16px;height:8px;background:#282a2a;"></div>
<div class="a" style="left:408px;top:485px;width:16px;height:8px;background:#272b2d;"></div>
<div class="a" style="left:424px;top:485px;width:16px;height:8px;background:#272b2d;"></div>
<div class="a" style="left:440px;top:485px;width:16px;height:8px;background:#272929;"></div>
<div class="a" style="left:456px;top:485px;width:16px;height:8px;background:#272929;"></div>
<div class="a" style="left:472px;top:485px;width:16px;height:8px;background:#272929;"></div>
<div class="a" style="left:224px;top:493px;width:8px;height:32px;background:#2c3033;"></div>
<div class="a" style="left:232px;top:493px;width:16px;height:16px;background:#454444;"></div>
<div class="a" style="left:248px;top:493px;width:16px;height:16px;background:#434343;"></div>
<div class="a" style="left:264px;top:493px;width:16px;height:16px;background:#434343;"></div>
<div class="a" style="left:280px;top:493px;width:16px;height:16px;background:#3b3d3d;"></div>
<div class="a" style="left:296px;top:493px;width:16px;height:16px;background:#404141;"></div>
<div class="a" style="left:312px;top:493px;width:16px;height:16px;background:#424242;"></div>
<div class="a" style="left:328px;top:493px;width:16px;height:16px;background:#313332;"></div>
<div class="a" style="left:344px;top:493px;width:16px;height:16px;background:#404141;"></div>
<div class="a" style="left:360px;top:493px;width:16px;height:16px;background:#404141;"></div>
<div class="a" style="left:376px;top:493px;width:16px;height:16px;background:#3e3e3e;"></div>
<div class="a" style="left:392px;top:493px;width:16px;height:16px;background:#464544;"></div>
<div class="a" style="left:408px;top:493px;width:16px;height:16px;background:#404343;"></div>
<div class="a" style="left:424px;top:493px;width:16px;height:16px;background:#424443;"></div>
<div class="a" style="left:440px;top:493px;width:16px;height:16px;background:#3d3f3f;"></div>
<div class="a" style="left:456px;top:493px;width:16px;height:16px;background:#403d3c;"></div>
<div class="a" style="left:472px;top:493px;width:16px;height:16px;background:#404040;"></div>
<div class="a" style="left:232px;top:509px;width:16px;height:16px;background:#484747;"></div>
<div class="a" style="left:248px;top:509px;width:16px;height:16px;background:#474646;"></div>
<div class="a" style="left:264px;top:509px;width:16px;height:16px;background:#454445;"></div>
<div class="a" style="left:280px;top:509px;width:16px;height:16px;background:#434444;"></div>
<div class="a" style="left:296px;top:509px;width:16px;height:16px;background:#414444;"></div>
<div class="a" style="left:312px;top:509px;width:16px;height:16px;background:#454340;"></div>
<div class="a" style="left:328px;top:509px;width:16px;height:16px;background:#444545;"></div>
<div class="a" style="left:344px;top:509px;width:16px;height:16px;background:#4a4a49;"></div>
<div class="a" style="left:360px;top:509px;width:16px;height:16px;background:#2b2928;"></div>
<div class="a" style="left:221px;top:534px;width:360px;height:1px;border-top:1px dotted #4a4d4f;height:0;"></div>
<div class="a" style="left:226px;top:548px;width:8px;height:36px;background:#2c3033;"></div>
<div class="a" style="left:234px;top:548px;width:16px;height:8px;background:#625d5c;"></div>
<div class="a" style="left:250px;top:548px;width:16px;height:8px;background:#4b4b4b;"></div>
<div class="a" style="left:266px;top:548px;width:16px;height:8px;background:#515151;"></div>
<div class="a" style="left:282px;top:548px;width:16px;height:8px;background:#434646;"></div>
<div class="a" style="left:298px;top:548px;width:16px;height:8px;background:#555452;"></div>
<div class="a" style="left:314px;top:548px;width:16px;height:8px;background:#4c4b4a;"></div>
<div class="a" style="left:330px;top:548px;width:16px;height:8px;background:#514f4e;"></div>
<div class="a" style="left:346px;top:548px;width:16px;height:8px;background:#5c5a55;"></div>
<div class="a" style="left:362px;top:548px;width:16px;height:8px;background:#504e4c;"></div>
<div class="a" style="left:378px;top:548px;width:16px;height:8px;background:#4b4b4a;"></div>
<div class="a" style="left:394px;top:548px;width:16px;height:8px;background:#545352;"></div>
<div class="a" style="left:410px;top:548px;width:16px;height:8px;background:#5a6161;"></div>
<div class="a" style="left:426px;top:548px;width:16px;height:8px;background:#484947;"></div>
<div class="a" style="left:442px;top:548px;width:16px;height:8px;background:#4c4c4b;"></div>
<div class="a" style="left:458px;top:548px;width:16px;height:8px;background:#54534c;"></div>
<div class="a" style="left:474px;top:548px;width:16px;height:8px;background:#363636;"></div>
<div class="a" style="left:234px;top:556px;width:16px;height:16px;background:#343333;"></div>
<div class="a" style="left:250px;top:556px;width:16px;height:16px;background:#363636;"></div>
<div class="a" style="left:266px;top:556px;width:16px;height:16px;background:#363635;"></div>
<div class="a" style="left:282px;top:556px;width:16px;height:16px;background:#2f3131;"></div>
<div class="a" style="left:298px;top:556px;width:16px;height:16px;background:#303131;"></div>
<div class="a" style="left:314px;top:556px;width:16px;height:16px;background:#303131;"></div>
<div class="a" style="left:330px;top:556px;width:16px;height:16px;background:#333535;"></div>
<div class="a" style="left:346px;top:556px;width:16px;height:16px;background:#393a3a;"></div>
<div class="a" style="left:362px;top:556px;width:16px;height:16px;background:#2f3232;"></div>
<div class="a" style="left:378px;top:556px;width:16px;height:16px;background:#303232;"></div>
<div class="a" style="left:394px;top:556px;width:16px;height:16px;background:#343434;"></div>
<div class="a" style="left:410px;top:556px;width:16px;height:16px;background:#303232;"></div>
<div class="a" style="left:426px;top:556px;width:16px;height:16px;background:#2f3131;"></div>
<div class="a" style="left:442px;top:556px;width:16px;height:16px;background:#313232;"></div>
<div class="a" style="left:458px;top:556px;width:16px;height:16px;background:#2f2f2f;"></div>
<div class="a" style="left:474px;top:556px;width:16px;height:16px;background:#2a2b2b;"></div>
<div class="a" style="left:234px;top:572px;width:16px;height:12px;background:#515151;"></div>
<div class="a" style="left:250px;top:572px;width:16px;height:12px;background:#585250;"></div>
<div class="a" style="left:266px;top:572px;width:16px;height:12px;background:#434646;"></div>
<div class="a" style="left:282px;top:572px;width:16px;height:12px;background:#4d4d4c;"></div>
<div class="a" style="left:298px;top:572px;width:16px;height:12px;background:#4a5052;"></div>
<div class="a" style="left:314px;top:572px;width:16px;height:12px;background:#44433e;"></div>
<div class="a" style="left:330px;top:572px;width:16px;height:12px;background:#4f4f4e;"></div>
<div class="a" style="left:221px;top:593px;width:360px;height:1px;border-top:1px dotted #4a4d4f;height:0;"></div>
<div class="a" style="left:329px;top:601px;width:16px;height:8px;background:#272929;"></div>
<div class="a" style="left:225px;top:609px;width:8px;height:32px;background:#2c3033;"></div>
<div class="a" style="left:233px;top:609px;width:16px;height:16px;background:#464344;"></div>
<div class="a" style="left:249px;top:609px;width:16px;height:16px;background:#444243;"></div>
<div class="a" style="left:265px;top:609px;width:16px;height:16px;background:#3a3f42;"></div>
<div class="a" style="left:281px;top:609px;width:16px;height:16px;background:#3d3737;"></div>
<div class="a" style="left:297px;top:609px;width:16px;height:16px;background:#454545;"></div>
<div class="a" style="left:313px;top:609px;width:16px;height:16px;background:#3e3f3f;"></div>
<div class="a" style="left:329px;top:609px;width:16px;height:16px;background:#434343;"></div>
<div class="a" style="left:345px;top:609px;width:16px;height:16px;background:#414242;"></div>
<div class="a" style="left:361px;top:609px;width:16px;height:16px;background:#444241;"></div>
<div class="a" style="left:377px;top:609px;width:16px;height:16px;background:#414141;"></div>
<div class="a" style="left:393px;top:609px;width:16px;height:16px;background:#464646;"></div>
<div class="a" style="left:409px;top:609px;width:16px;height:16px;background:#444545;"></div>
<div class="a" style="left:425px;top:609px;width:16px;height:16px;background:#3e3f3f;"></div>
<div class="a" style="left:441px;top:609px;width:16px;height:16px;background:#45403e;"></div>
<div class="a" style="left:457px;top:609px;width:16px;height:16px;background:#424343;"></div>
<div class="a" style="left:473px;top:609px;width:16px;height:16px;background:#2a2727;"></div>
<div class="a" style="left:233px;top:625px;width:16px;height:16px;background:#474546;"></div>
<div class="a" style="left:249px;top:625px;width:16px;height:16px;background:#454445;"></div>
<div class="a" style="left:265px;top:625px;width:16px;height:16px;background:#434344;"></div>
<div class="a" style="left:281px;top:625px;width:16px;height:16px;background:#3f4142;"></div>
<div class="a" style="left:297px;top:625px;width:16px;height:16px;background:#3e403f;"></div>
<div class="a" style="left:221px;top:652px;width:360px;height:1px;border-top:1px dotted #4a4d4f;height:0;"></div>
<div class="a" style="left:221px;top:681px;width:27px;height:22px;border:1px solid #44484a;border-radius:3px;box-sizing:border-box;"></div>
<div class="t" style="left:221px;top:682px;width:27px;height:20px;line-height:20px;text-align:center;font-size:11px;color:#c4c4c4;">&lt;&lt;</div>
<div class="a" style="left:252px;top:681px;width:20px;height:22px;border:1px solid #44484a;border-radius:3px;box-sizing:border-box;"></div>
<div class="t" style="left:252px;top:682px;width:20px;height:20px;line-height:20px;text-align:center;font-size:11px;color:#c4c4c4;">&lt;</div>
<div class="a" style="left:276px;top:681px;width:21px;height:22px;background:#5c6063;border-radius:3px;"></div>
<div class="t" style="left:276px;top:683px;width:21px;height:20px;line-height:20px;text-align:center;font-size:11px;color:#ececec;font-weight:700;">1</div>
<div class="a" style="left:301px;top:681px;width:20px;height:22px;border:1px solid #44484a;border-radius:3px;box-sizing:border-box;"></div>
<div class="t" style="left:301px;top:682px;width:20px;height:20px;line-height:20px;text-align:center;font-size:11px;color:#c4c4c4;">&gt;</div>
<div class="a" style="left:325px;top:681px;width:26px;height:22px;border:1px solid #44484a;border-radius:3px;box-sizing:border-box;"></div>
<div class="t" style="left:325px;top:682px;width:26px;height:20px;line-height:20px;text-align:center;font-size:11px;color:#c4c4c4;">&gt;&gt;</div>
<div class="a" style="left:224px;top:717px;width:192px;height:40px;background:#25282a;"></div>
<div class="a" style="left:216px;top:725px;width:8px;height:16px;background:#333637;"></div>
<div class="a" style="left:224px;top:725px;width:16px;height:16px;background:#6b6d6f;"></div>
<div class="a" style="left:240px;top:725px;width:16px;height:16px;background:#6e7072;"></div>
<div class="a" style="left:256px;top:725px;width:16px;height:16px;background:#707273;"></div>
<div class="a" style="left:272px;top:725px;width:16px;height:16px;background:#727475;"></div>
<div class="a" style="left:288px;top:725px;width:16px;height:16px;background:#737474;"></div>
<div class="a" style="left:304px;top:725px;width:16px;height:16px;background:#767776;"></div>
<div class="a" style="left:320px;top:725px;width:16px;height:16px;background:#777979;"></div>
<div class="a" style="left:336px;top:725px;width:16px;height:16px;background:#757777;"></div>
<div class="a" style="left:352px;top:725px;width:16px;height:16px;background:#767777;"></div>
<div class="a" style="left:368px;top:725px;width:16px;height:16px;background:#787775;"></div>
<div class="a" style="left:384px;top:725px;width:16px;height:16px;background:#747877;"></div>
<div class="a" style="left:400px;top:725px;width:16px;height:16px;background:#797878;"></div>
<div class="a" style="left:686px;top:92.5px;width:80px;height:80px;border-radius:40px;background:#a0806c;"></div>
<div class="t" style="left:704.50px;top:124px;font-size:36px;color:#fff;transform:scaleX(0.9652);transform-origin:0 50%;">AL</div>
<div class="a" style="left:803px;top:100px;width:28px;height:22px;border:1px solid #45494b;border-radius:3px;box-sizing:border-box;background:#212424;"></div>
<div class="a" style="left:803px;top:134px;width:28px;height:22px;border:1px solid #45494b;border-radius:3px;box-sizing:border-box;background:#212424;"></div>
<svg class="a" style="left:811px;top:105px;" width="12.4" height="12.4" viewBox="0 0 12.4 12.4"><circle cx="6.1" cy="6.1" r="5.3" fill="none" stroke="#fff" stroke-width="1.9"/><path d="M6.1 2.9 L9.5 6.9 L7.4 6.9 L7.4 9.4 L4.8 9.4 L4.8 6.9 L2.7 6.9 Z" fill="#fff"/></svg>
<svg class="a" style="left:811.6px;top:138.5px;" width="12" height="14" viewBox="0 0 12 14"><path d="M4.7 2.6 V1.1 H8.1 V2.6" stroke="#fff" stroke-width="1" fill="none"/><rect x="0.4" y="2.3" width="11.4" height="1.1" fill="#fff"/><rect x="1.6" y="3.7" width="9.2" height="9.8" fill="#fff"/><path d="M4.1 5 V12.2 M6.4 5 V12.2 M8.7 5 V12.2" stroke="#212424" stroke-width="1"/></svg>
<svg class="a" style="left:869px;top:85px;" width="28" height="28" viewBox="0 0 28 28"><defs><radialGradient id="cg" cx="38%" cy="30%" r="75%"><stop offset="0" stop-color="#fff3a8"/><stop offset="0.45" stop-color="#f9d545"/><stop offset="1" stop-color="#ec9a12"/></radialGradient></defs><circle cx="14.2" cy="13.9" r="12.8" fill="none" stroke="#43484b" stroke-width="1"/><circle cx="14.2" cy="13.9" r="11.3" fill="url(#cg)" stroke="#f2b628" stroke-width="0.8" stroke-dasharray="1.2 0.9"/><text transform="translate(13.9 18.9) scale(0.8 1)" x="0" y="0" text-anchor="middle" font-family="Liberation Sans" font-size="13" fill="#4f4010" stroke="#4f4010" stroke-width="0.6">T</text></svg>
<div class="t" style="left:900.40px;top:88px;font-size:20px;color:#e0e0e0;transform:scaleX(0.9362);transform-origin:0 50%;-webkit-text-stroke:0.72px currentColor;">alessandro@rosao.skydemo.com.br</div>
<div class="a" style="left:1205px;top:88px;width:80px;height:22px;border:1px solid #45494b;border-radius:3px;box-sizing:border-box;background:#212424;"></div>
<svg class="a" style="left:1212.5px;top:93px;" width="14" height="14" viewBox="0 0 14 14"><path d="M7.4 3 H3.8 Q1.6 3 1.6 5.2 V9.7 Q1.6 11.9 3.8 11.9 H8.6 Q10.8 11.9 10.8 9.7 V7.8" stroke="#fff" stroke-width="2.1" fill="none" stroke-linecap="round"/><path d="M4.9 9.2 L10.6 3.8" stroke="#fff" stroke-width="1.8"/><circle cx="11.9" cy="2.5" r="1" fill="#fff"/></svg>
<div class="t" style="left:1229.20px;top:89px;font-size:10.5px;color:#ececec;letter-spacing:0.047px;">Renomear</div>
<div class="a" style="left:871px;top:117px;width:16px;height:8px;background:#323434;"></div>
<div class="a" style="left:903px;top:117px;width:16px;height:8px;background:#282b2b;"></div>
<div class="a" style="left:919px;top:117px;width:16px;height:8px;background:#2a2c2c;"></div>
<div class="a" style="left:935px;top:117px;width:16px;height:8px;background:#2c2e2e;"></div>
<div class="a" style="left:951px;top:117px;width:16px;height:8px;background:#2c2e2e;"></div>
<div class="a" style="left:967px;top:117px;width:16px;height:8px;background:#2c2e2e;"></div>
<div class="a" style="left:983px;top:117px;width:16px;height:8px;background:#2b2d2d;"></div>
<div class="a" style="left:1015px;top:117px;width:16px;height:8px;background:#2c2e2e;"></div>
<div class="a" style="left:1031px;top:117px;width:16px;height:8px;background:#2c2e2e;"></div>
<div class="a" style="left:1047px;top:117px;width:16px;height:8px;background:#2e2c2c;"></div>
<div class="a" style="left:1079px;top:117px;width:16px;height:8px;background:#282a2a;"></div>
<div class="a" style="left:1111px;top:117px;width:16px;height:8px;background:#2d2f2f;"></div>
<div class="a" style="left:1143px;top:117px;width:16px;height:8px;background:#262b2c;"></div>
<div class="a" style="left:1159px;top:117px;width:16px;height:8px;background:#292a2a;"></div>
<div class="a" style="left:1175px;top:117px;width:16px;height:8px;background:#2a2c2c;"></div>
<div class="a" style="left:863px;top:125px;width:8px;height:12px;background:#222a30;"></div>
<div class="a" style="left:871px;top:125px;width:16px;height:12px;background:#454543;"></div>
<div class="a" style="left:887px;top:125px;width:16px;height:12px;background:#4a4a47;"></div>
<div class="a" style="left:903px;top:125px;width:16px;height:12px;background:#464644;"></div>
<div class="a" style="left:919px;top:125px;width:16px;height:12px;background:#404242;"></div>
<div class="a" style="left:935px;top:125px;width:16px;height:12px;background:#434040;"></div>
<div class="a" style="left:951px;top:125px;width:16px;height:12px;background:#413f3e;"></div>
<div class="a" style="left:967px;top:125px;width:16px;height:12px;background:#393a3a;"></div>
<div class="a" style="left:983px;top:125px;width:16px;height:12px;background:#555856;"></div>
<div class="a" style="left:999px;top:125px;width:16px;height:12px;background:#444443;"></div>
<div class="a" style="left:1015px;top:125px;width:16px;height:12px;background:#484a48;"></div>
<div class="a" style="left:1031px;top:125px;width:16px;height:12px;background:#40423f;"></div>
<div class="a" style="left:1047px;top:125px;width:16px;height:12px;background:#544f4b;"></div>
<div class="a" style="left:1063px;top:125px;width:16px;height:12px;background:#433f3d;"></div>
<div class="a" style="left:1079px;top:125px;width:16px;height:12px;background:#575852;"></div>
<div class="a" style="left:1095px;top:125px;width:16px;height:12px;background:#3c3d3c;"></div>
<div class="a" style="left:1111px;top:125px;width:16px;height:12px;background:#383b3c;"></div>
<div class="a" style="left:1127px;top:125px;width:16px;height:12px;background:#525450;"></div>
<div class="a" style="left:1143px;top:125px;width:16px;height:12px;background:#3d3a38;"></div>
<div class="a" style="left:1159px;top:125px;width:16px;height:12px;background:#464744;"></div>
<div class="a" style="left:1175px;top:125px;width:16px;height:12px;background:#4a4a48;"></div>
<div class="a" style="left:1191px;top:125px;width:16px;height:12px;background:#2a2b2b;"></div>
<div class="t" style="left:670.20px;top:219px;font-size:13px;color:#6a9fd8;transform:scaleX(0.9744);transform-origin:0 50%;">Informações</div>
<div class="t" style="left:764.70px;top:219px;font-size:13px;color:#6a9fd8;transform:scaleX(0.9442);transform-origin:0 50%;">Configuração de serviços</div>
<div class="t" style="left:927.70px;top:219px;font-size:13px;color:#6a9fd8;transform:scaleX(0.9641);transform-origin:0 50%;">Grupos</div>
<div class="t" style="left:993.30px;top:219px;font-size:13px;color:#6a9fd8;transform:scaleX(0.9633);transform-origin:0 50%;">Bloqueios</div>
<div class="t" style="left:1072.70px;top:219px;font-size:13px;color:#6a9fd8;transform:scaleX(0.9724);transform-origin:0 50%;">Apelido / Redirecionamento</div>
<div class="a" style="left:659px;top:245px;width:1010px;height:1px;background:#44484a;"></div>
<div class="a" style="left:1241px;top:210px;width:71px;height:36px;background:#1f2121;box-sizing:border-box;border:1px solid #4b4f52;border-bottom:none;border-top:3px solid #2b6cab;"></div>
<div class="t" style="left:1252.00px;top:219px;font-size:13px;color:#e0d8cc;letter-spacing:-0.147px;-webkit-text-stroke:0.47px currentColor;">Webmail</div>
<div class="t" style="left:1325.40px;top:219px;font-size:13px;color:#6a9fd8;transform:scaleX(0.9161);transform-origin:0 50%;">Segurança</div>
<div class="a" style="left:1237px;top:206px;width:80px;height:43px;border:2px solid #f73538;box-sizing:border-box;"></div>
<div class="a badge" style="left:1303.5px;top:233.6px;">2</div>
<div class="a" style="left:659px;top:246px;width:1px;height:652px;background:#3c4042;"></div>
<div class="a" style="left:659px;top:897px;width:1010px;height:1px;background:#3c4042;"></div>
<div class="t" style="left:690.20px;top:277px;font-size:18px;color:#e2e2e2;letter-spacing:0.071px;-webkit-text-stroke:0.65px currentColor;">Preferências do Webmail</div>
<div class="t" style="left:690.20px;top:306px;font-size:13px;color:#b9b9b9;transform:scaleX(0.9656);transform-origin:0 50%;">Clique abaixo para editar as informações de assinatura e de composição de e-mail para esta identidade principal</div>
<div class="a" style="left:690px;top:371px;width:979px;height:1px;background:#44484a;"></div>
<div class="a" style="left:690px;top:336px;width:125px;height:36px;background:#1f2121;box-sizing:border-box;border:1px solid #4b4f52;border-bottom:none;border-top:3px solid #2b6cab;"></div>
<div class="t" style="left:701.00px;top:345px;font-size:13px;color:#e0d8cc;letter-spacing:-0.107px;-webkit-text-stroke:0.47px currentColor;">Identidade padrão</div>
<div class="t" style="left:828.50px;top:345px;font-size:13px;color:#6a9fd8;transform:scaleX(0.9530);transform-origin:0 50%;">Configurações e permissões</div>
<div class="a" style="left:686px;top:331px;width:133px;height:45px;border:2px solid #f73538;box-sizing:border-box;"></div>
<div class="a badge" style="left:804.4px;top:362.7px;">3</div>
<div class="t" style="left:690.20px;top:392px;font-size:15px;color:#e0e0e0;letter-spacing:-0.178px;">Nome</div>
<div class="a" style="left:690px;top:417px;width:472px;height:30px;border:1px solid #45494b;border-radius:4px;box-sizing:border-box;"></div>
<div class="t" style="left:697.00px;top:422px;font-size:14px;color:#cfcfcf;">Rosão</div>
<div class="t" style="left:690.20px;top:457px;font-size:15px;color:#e0e0e0;transform:scaleX(0.9612);transform-origin:0 50%;">Responder para</div>
<div class="a" style="left:690px;top:482px;width:472px;height:30px;border:1px solid #45494b;border-radius:4px;box-sizing:border-box;"></div>
<div class="a" style="left:1259px;top:392px;width:1px;height:130px;border-left:1px dashed #45494b;width:0;"></div>
<div class="t" style="left:1290.40px;top:392px;font-size:15px;color:#e0e0e0;transform:scaleX(0.9524);transform-origin:0 50%;">Organização</div>
<div class="a" style="left:1290px;top:417px;width:400px;height:30px;border:1px solid #45494b;border-radius:4px;box-sizing:border-box;"></div>
<div class="t" style="left:1290.40px;top:457px;font-size:15px;color:#e0e0e0;transform:scaleX(0.9618);transform-origin:0 50%;">Cópia oculta</div>
<div class="a" style="left:1290px;top:482px;width:400px;height:30px;border:1px solid #45494b;border-radius:4px;box-sizing:border-box;"></div>
<div class="t" style="left:690.20px;top:532px;font-size:15px;color:#e6e6e6;transform:scaleX(0.9623);transform-origin:0 50%;-webkit-text-stroke:0.54px currentColor;">Assinatura</div>
<div class="a" style="left:690px;top:566px;width:13px;height:13px;border:1px solid #8a8a8a;border-radius:2px;box-sizing:border-box;background:#3a3a3a;"></div>
<div class="t" style="left:710.40px;top:562px;font-size:13px;color:#d0d0d0;letter-spacing:-0.135px;">Assinatura em modo html</div>
<div class="a" style="left:690px;top:607px;width:1000px;height:230px;border:1px solid #45494b;border-radius:4px;box-sizing:border-box;"></div>
<div class="t" style="left:696.90px;top:612px;font-size:14px;color:#cfcfcf;">Assinatura no formato simples!</div>
<div class="t" style="left:696.90px;top:652px;font-size:14px;color:#cfcfcf;">Apenas texto...</div>
<div class="t" style="left:696.90px;top:692px;font-size:14px;color:#cfcfcf;">At.te Rosão!</div>
<svg class="a" style="left:696.7px;top:708px;" width="29.5" height="5.2" viewBox="0 0 29.5 5.2"><path d="M0.0 1.34 L0.5 1.06 L1.0 1.18 L1.5 1.67 L2.0 2.38 L2.5 3.13 L3.0 3.71 L3.5 3.95 L4.0 3.79 L4.5 3.27 L5.0 2.54 L5.5 1.80 L6.0 1.25 L6.5 1.05 L7.0 1.25 L7.5 1.80 L8.0 2.54 L8.5 3.27 L9.0 3.79 L9.5 3.95 L10.0 3.71 L10.5 3.13 L11.0 2.38 L11.5 1.67 L12.0 1.18 L12.5 1.06 L13.0 1.34 L13.5 1.94 L14.0 2.69 L14.5 3.40 L15.0 3.85 L15.5 3.93 L16.0 3.62 L16.5 2.99 L17.0 2.23 L17.5 1.55 L18.0 1.12 L18.5 1.08 L19.0 1.43 L19.5 2.08 L20.0 2.84 L20.5 3.51 L21.0 3.90 L21.5 3.90 L22.0 3.51 L22.5 2.84 L23.0 2.08 L23.5 1.43 L24.0 1.08 L24.5 1.12 L25.0 1.55 L25.5 2.23 L26.0 2.99 L26.5 3.62 L27.0 3.93 L27.5 3.85 L28.0 3.40 L28.5 2.69 L29.0 1.94" stroke="#f00" stroke-width="1.6" fill="none" stroke-linejoin="round"/></svg>
<div class="a" style="left:845px;top:847px;width:82px;height:30px;border:1px solid #45494b;border-radius:4px;box-sizing:border-box;"></div>
<div class="t" style="left:857.80px;top:852px;font-size:14px;color:#dcdcdc;letter-spacing:0.046px;">Cancelar</div>
<div class="a" style="left:690px;top:847px;width:151px;height:30px;background:#286396;border:1px solid #1f5484;border-radius:4px;box-sizing:border-box;"></div>
<div class="t" style="left:703.00px;top:852px;font-size:14px;color:#fff;">Salvar modificações</div>
<div class="a" style="left:685px;top:843px;width:161px;height:38px;border:2px solid #f73538;box-sizing:border-box;"></div>
<div class="a badge" style="left:665.3px;top:863.3px;">4</div>
</body></html>
